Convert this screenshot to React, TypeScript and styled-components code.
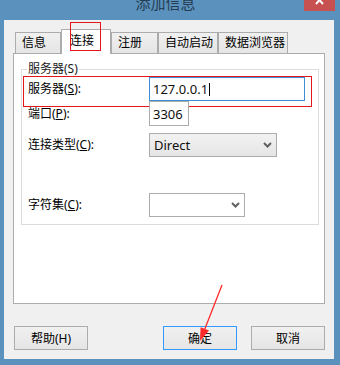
import styled, { createGlobalStyle } from 'styled-components';

const GlobalStyle = createGlobalStyle`
  html, body {
    margin: 0;
    padding: 0;
    width: 340px;
    height: 365px;
    overflow: hidden;
    background: #5a92bd;
  }
  body {
    font-family: "Noto Sans", "Noto Sans CJK SC", sans-serif;
    font-size: 12px;
    color: #000;
  }
`;

const tabs = [
  { label: '信息', width: 46 },
  { label: '连接', width: 50, active: true },
  { label: '注册', width: 47 },
  { label: '自动启动', width: 60 },
  { label: '数据浏览器', width: 70 },
];

function Chevron() {
  return (
    <svg width="9" height="6" viewBox="0 0 9 6">
      <path d="M1 1 L4.5 4.5 L8 1" fill="none" stroke="#606060" strokeWidth="2" />
    </svg>
  );
}

export default function App() {
  return (
    <>
      <GlobalStyle />
      <SWindow>
        <STitleBar>
          <STitle>添加信息</STitle>
          <SCloseButton>
            <svg width="31" height="11" viewBox="0 0 31 11">
              <path d="M12 -4 L19 4 M19 -4 L12 4" stroke="#fff" strokeWidth="2" />
            </svg>
          </SCloseButton>
        </STitleBar>

        <SBody>
          <STabStrip>
            {tabs.map((t) => (
              <STab key={t.label} $width={t.width} $active={!!t.active}>
                {t.label}
                {t.active && <SMark $left={8} $top={-8} $width={31} $height={29} />}
              </STab>
            ))}
          </STabStrip>

          <STabPanel>
            <SGroup>
              <legend>服务器(S)</legend>

              <SRow $top={0}>
                <SLabel>
                  服务器(<u>S</u>):
                </SLabel>
                <STextBox $width={156} $height={24} $focused>
                  127.0.0.1
                  <SCaret />
                </STextBox>
                <SMark $left={-5} $top={-1} $width={289} $height={31} />
              </SRow>

              <SRow $top={0}>
                <SLabel>
                  端口(<u>P</u>):
                </SLabel>
                <STextBox $width={40} $height={25}>
                  3306
                </STextBox>
              </SRow>

              <SRow $top={7}>
                <SLabel>
                  连接类型(<u>C</u>):
                </SLabel>
                <SSelect $width={128} $raised>
                  <span>Direct</span>
                  <Chevron />
                </SSelect>
              </SRow>

              <SRow $top={36}>
                <SLabel>
                  字符集(<u>C</u>):
                </SLabel>
                <SSelect $width={96}>
                  <span />
                  <Chevron />
                </SSelect>
              </SRow>
            </SGroup>
          </STabPanel>

          <SButtonBar>
            <SButton>帮助(H)</SButton>
            <SButtonGroup>
              <SButton $default>确定</SButton>
              <SButton>取消</SButton>
            </SButtonGroup>
          </SButtonBar>
        </SBody>

        <SArrow width="32" height="62" viewBox="0 0 32 62">
          <line x1="29" y1="2" x2="11.8" y2="45.9" stroke="#ff2a2a" strokeWidth="1.3" />
          <polygon points="7,58 16,47.6 7.6,44.2" fill="#ff2a2a" />
        </SArrow>
      </SWindow>
    </>
  );
}

const SWindow = styled.div`
  position: relative;
  width: 340px;
  height: 365px;
  display: flex;
  flex-direction: column;
  background: #5a92bd;
`;

const STitleBar = styled.div`
  height: 20px;
  display: flex;
  align-items: flex-start;
  overflow: hidden;
`;

const STitle = styled.div`
  flex: 1;
  padding-left: 27px;
  text-align: center;
  font-family: "Noto Sans CJK SC", sans-serif;
  font-size: 15px;
  line-height: 6px;
  color: #263d54;
`;

const SCloseButton = styled.div`
  width: 31px;
  height: 11px;
  margin-right: 5px;
  background: #c75050;
  svg {
    display: block;
  }
`;

const SBody = styled.div`
  flex: 1;
  margin: 0 6px 6px 4px;
  padding: 9px 0 9px 9px;
  background: #f0f0f0;
  display: flex;
  flex-direction: column;
`;

const STabStrip = styled.div`
  height: 24px;
  padding-left: 2px;
  display: flex;
  align-items: flex-end;
`;

const STab = styled.div<{ $width: number; $active: boolean }>`
  position: relative;
  box-sizing: border-box;
  width: ${(p) => p.$width}px;
  height: ${(p) => (p.$active ? 25 : 21)}px;
  margin-bottom: ${(p) => (p.$active ? -1 : 0)}px;
  z-index: ${(p) => (p.$active ? 1 : 0)};
  padding: ${(p) => (p.$active ? '3px 0 0 8px' : '2px 0 0 6px')};
  border: 1px solid #acacac;
  border-bottom: none;
  background: ${(p) => (p.$active ? '#fff' : 'linear-gradient(#f0f0f0, #e5e5e5)')};
  line-height: 16px;
  white-space: nowrap;
`;

const SMark = styled.div<{ $left: number; $top: number; $width: number; $height: number }>`
  position: absolute;
  left: ${(p) => p.$left}px;
  top: ${(p) => p.$top}px;
  width: ${(p) => p.$width}px;
  height: ${(p) => p.$height}px;
  box-sizing: border-box;
  border: 1px solid #e4161c;
  pointer-events: none;
`;

const STabPanel = styled.div`
  box-sizing: border-box;
  width: 312px;
  height: 251px;
  padding: 7px 0 0 7px;
  border: 1px solid #acacac;
  background: #fff;
`;

const SGroup = styled.fieldset`
  box-sizing: border-box;
  width: 298px;
  margin: 0;
  padding: 0 6px 7px 6px;
  border: 1px solid #dcdcdc;

  legend {
    padding: 0 1px;
    margin-left: -1px;
    line-height: 16px;
    color: #1a1a1a;
  }
`;

const SRow = styled.div<{ $top: number }>`
  position: relative;
  display: grid;
  grid-template-columns: 121px auto;
  justify-content: start;
  align-items: center;
  margin-top: ${(p) => p.$top}px;
`;

const SLabel = styled.label`
  line-height: 16px;
  white-space: nowrap;

  u {
    text-underline-offset: 1px;
  }
`;

const STextBox = styled.div<{ $width: number; $height: number; $focused?: boolean }>`
  box-sizing: border-box;
  width: ${(p) => p.$width}px;
  height: ${(p) => p.$height}px;
  padding-left: 3px;
  display: flex;
  align-items: center;
  border: 1px solid ${(p) => (p.$focused ? '#3c8fd8' : '#acacac')};
  background: #fff;
  font-size: 13px;
  color: #111;
`;

const SCaret = styled.span`
  width: 1px;
  height: 13px;
  margin-left: 1px;
  background: #000;
`;

const SSelect = styled.div<{ $width: number; $raised?: boolean }>`
  box-sizing: border-box;
  width: ${(p) => p.$width}px;
  height: 24px;
  padding: 0 4px 0 4px;
  display: flex;
  align-items: center;
  justify-content: space-between;
  border: 1px solid #acacac;
  background: ${(p) => (p.$raised ? 'linear-gradient(#f2f2f2, #e5e5e5)' : '#fff')};
  font-size: 13px;
  color: #111;
`;

const SButtonBar = styled.div`
  margin-top: 22px;
  padding-left: 1px;
  padding-right: 9px;
  display: flex;
  justify-content: space-between;
`;

const SButtonGroup = styled.div`
  display: flex;
  gap: 14px;
`;

const SButton = styled.button<{ $default?: boolean }>`
  box-sizing: border-box;
  width: 74px;
  height: 24px;
  padding: 0;
  border: 1px solid ${(p) => (p.$default ? '#3399ff' : '#acacac')};
  background: linear-gradient(#f0f0f0, #e5e5e5);
  font-family: "Noto Sans", "Noto Sans CJK SC", sans-serif;
  font-size: 12px;
  color: #000;
`;

const SArrow = styled.svg`
  position: absolute;
  left: 193px;
  top: 283px;
  pointer-events: none;
`;
